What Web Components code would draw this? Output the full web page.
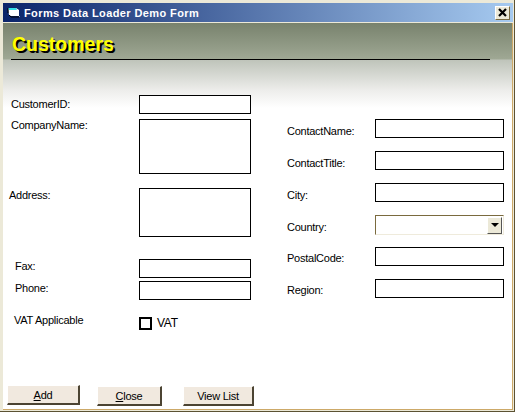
<!DOCTYPE html>
<html>
<head>
<meta charset="utf-8">
<title>Forms Data Loader Demo Form</title>
<style>
html,body{margin:0;padding:0;background:#ece9d8;}
body{font-family:"Liberation Sans",Arial,sans-serif;font-size:11px;letter-spacing:-.25px;color:#000;}
</style>
</head>
<body>
<app-window caption="Forms Data Loader Demo Form">
  <form-heading slot="heading">Customers</form-heading>

  <div slot="left" style="display:flex;flex-direction:column">
    <form-field label="CustomerID:" indent="8" lift="-1"><text-box h="19"></text-box></form-field>
    <form-field label="CompanyName:" indent="8" lift="-2" gap="5" top><text-box h="55"></text-box></form-field>
    <form-field label="Address:" indent="6" lift="-1" gap="14" top><text-box h="49"></text-box></form-field>
    <form-field label="Fax:" indent="12" lift="-3" gap="22"><text-box h="19"></text-box></form-field>
    <form-field label="Phone:" indent="12" lift="-3" gap="3"><text-box h="19"></text-box></form-field>
    <form-field label="VAT Applicable" indent="11" lift="-2" gap="12"><check-box>VAT</check-box></form-field>
  </div>

  <div slot="right" style="display:flex;flex-direction:column;gap:13px">
    <form-field label="ContactName:" col="88" lift="2"><text-box w="129" h="19"></text-box></form-field>
    <form-field label="ContactTitle:" col="88" lift="2"><text-box w="129" h="19"></text-box></form-field>
    <form-field label="City:" col="88" lift="2"><text-box w="129" h="19"></text-box></form-field>
    <form-field label="Country:" col="88" lift="2"><combo-box></combo-box></form-field>
    <form-field label="PostalCode:" col="88" lift="1" style="margin-top:-1px"><text-box w="129" h="19"></text-box></form-field>
    <form-field label="Region:" col="88" lift="1"><text-box w="129" h="19"></text-box></form-field>
  </div>

  <win-button slot="buttons" w="73" key="A" rest="dd" style="margin-top:-1px">Add</win-button>
  <win-button slot="buttons" w="65" key="C" rest="lose" style="margin-left:17px">Close</win-button>
  <win-button slot="buttons" w="71" style="margin-left:21px">View List</win-button>
</app-window>

<script>
class AppWindow extends HTMLElement{
    constructor(){
        super();
        this.attachShadow({mode:"open"});
    }
    connectedCallback(){
        this.shadowRoot.innerHTML = `
        <style>
            :host{display:flex;flex-direction:column;box-sizing:border-box;width:515px;height:412px;
                background:#ece9d8;padding:3px 1px 1px 3px;border-right:1px solid #5c5233;border-bottom:1px solid #5c5233;overflow:hidden}
            .bar{display:flex;align-items:center;height:19px;flex:none;padding:0 3px 0 4px;
                background:linear-gradient(90deg,#0a246a,#a6caf0);color:#fff;font-weight:bold;font-size:11px;letter-spacing:.4px}
            .bar svg{flex:none}
            .bar>svg{margin-right:3px}
            .cap{flex:1}
            .x{box-sizing:border-box;width:15px;height:14px;background:#ece9d8;border:1px solid;border-color:#fff #7a6a3e #7a6a3e #fff;
               display:flex;align-items:center;justify-content:center}
            .body{flex:1;background:linear-gradient(#78826d 0,#9fa894 36px,#bfc4ba 37px,#eeeeec 68px,#fff 85px);
                display:flex;flex-direction:column;margin-top:1px;position:relative;
                border-right:1px solid #cda968;border-bottom:1px solid #cda968}
            .cols{display:flex}
            .left{width:284px;flex:none}
            .right{padding-top:24px}
            .btns{display:flex;margin:auto 0 3px 4px;align-items:flex-start}
        </style>
        <div class="bar">
            <svg width="14" height="13" viewBox="0 0 14 13">
                <path d="M1 2h8l3 2v6H4L2 9z" fill="#fff"/>
                <path d="M1 2h8l1 2H2z" fill="#35e0e8"/>
                <path d="M1 2v5M2 9l2 2h8" fill="none" stroke="#000"/>
                <rect x="12" y="10" width="1" height="1" fill="#8fa0c0"/>
            </svg>
            <span class="cap">${this.getAttribute("caption")}</span>
            <span class="x"><svg width="9" height="9" viewBox="0 0 9 9"><path d="M1 1l7 7M8 1L1 8" stroke="#000" stroke-width="2.2" fill="none"/></svg></span>
        </div>
        <div class="body">
            <slot name="heading"></slot>
            <div class="cols">
                <div class="left"><slot name="left"></slot></div>
                <div class="right"><slot name="right"></slot></div>
            </div>
            <div class="btns"><slot name="buttons"></slot></div>
        </div>`;
    }
}
class FormHeading extends HTMLElement{
    constructor(){
        super();
        this.attachShadow({mode:"open"});
    }
    connectedCallback(){
        this.shadowRoot.innerHTML = `
        <style>
            :host{display:block;height:72px;box-sizing:border-box;padding:8px 0 0 9px}
            .t{font:bold 19.5px/26px "Liberation Sans",Arial,sans-serif;letter-spacing:0;color:#ffff00;text-shadow:2px 2px 0 #000;height:26px}
            .r{height:1px;background:#000;width:479px;margin:2px 0 0 -1px}
        </style>
        <div class="t"><slot></slot></div>
        <div class="r"></div>`;
    }
}
class FormField extends HTMLElement{
    constructor(){
        super();
        this.attachShadow({mode:"open"});
    }
    connectedCallback(){
        const col = this.getAttribute("col") || 136;
        const indent = this.getAttribute("indent") || 0;
        const gap = this.getAttribute("gap") || 0;
        const lift = +(this.getAttribute("lift") || 0);
        const top = this.hasAttribute("top");
        this.shadowRoot.innerHTML = `
        <style>
            :host{display:flex;align-items:flex-start;margin-top:${gap}px}
            .l{flex:none;box-sizing:border-box;width:${col}px;height:10px;padding-left:${indent}px;line-height:14px;white-space:nowrap;
               margin-top:${top?lift+1:lift+3}px}
        </style>
        <span class="l">${this.getAttribute("label")}</span>
        <slot></slot>`;
    }
}
class TextBox extends HTMLElement{
    constructor(){
        super();
        this.attachShadow({mode:"open"});
    }
    connectedCallback(){
        const w = this.getAttribute("w") || 112;
        const h = this.getAttribute("h") || 19;
        this.shadowRoot.innerHTML = `
        <style>
            :host{display:block;box-sizing:border-box;width:${w}px;height:${h}px;background:#fff;border:1px solid #000}
        </style>`;
    }
}
class ComboBox extends HTMLElement{
    constructor(){
        super();
        this.attachShadow({mode:"open"});
    }
    connectedCallback(){
        this.shadowRoot.innerHTML = `
        <style>
            :host{display:flex;justify-content:flex-end;align-items:center;box-sizing:border-box;width:129px;height:20px;background:#fff;
                border:1px solid;border-color:#7a6a3e #efebdc #efebdc #7a6a3e;padding-right:1px}
            .b{box-sizing:border-box;width:15px;height:17px;background:#ece9d8;border:1px solid;border-color:#fff #555 #555 #fff;
               display:flex;align-items:center;justify-content:center}
            .a{width:0;height:0;border:4px solid transparent;border-top:4px solid #000;border-bottom:0}
        </style>
        <div class="b"><div class="a"></div></div>`;
    }
}
class CheckBox extends HTMLElement{
    constructor(){
        super();
        this.attachShadow({mode:"open"});
    }
    connectedCallback(){
        this.shadowRoot.innerHTML = `
        <style>
            :host{display:flex;align-items:center;margin-top:4px;gap:5px;font-size:12px}
            .c{box-sizing:border-box;width:13px;height:13px;background:#fff;border:2px solid #000}
        </style>
        <div class="c"></div><slot></slot>`;
    }
}
class WinButton extends HTMLElement{
    constructor(){
        super();
        this.attachShadow({mode:"open"});
    }
    connectedCallback(){
        const w = this.getAttribute("w");
        const key = this.getAttribute("key");
        const u = key ? `<u>${key}</u>${this.getAttribute("rest")}` : this.textContent;
        this.shadowRoot.innerHTML = `
        <style>
            :host{display:flex;align-items:center;justify-content:center;box-sizing:border-box;width:${w}px;height:20px;padding-top:1px;
                background:#f1e9df;border:1px solid;border-color:#fff #4c4433 #4c4433 #fff;border-width:1px 2px 2px 1px}
        </style>
        <span>${u}</span>`;
    }
}
customElements.define('app-window',AppWindow);
customElements.define('form-heading',FormHeading);
customElements.define('form-field',FormField);
customElements.define('text-box',TextBox);
customElements.define('combo-box',ComboBox);
customElements.define('check-box',CheckBox);
customElements.define('win-button',WinButton);
</script>
</body>
</html>
